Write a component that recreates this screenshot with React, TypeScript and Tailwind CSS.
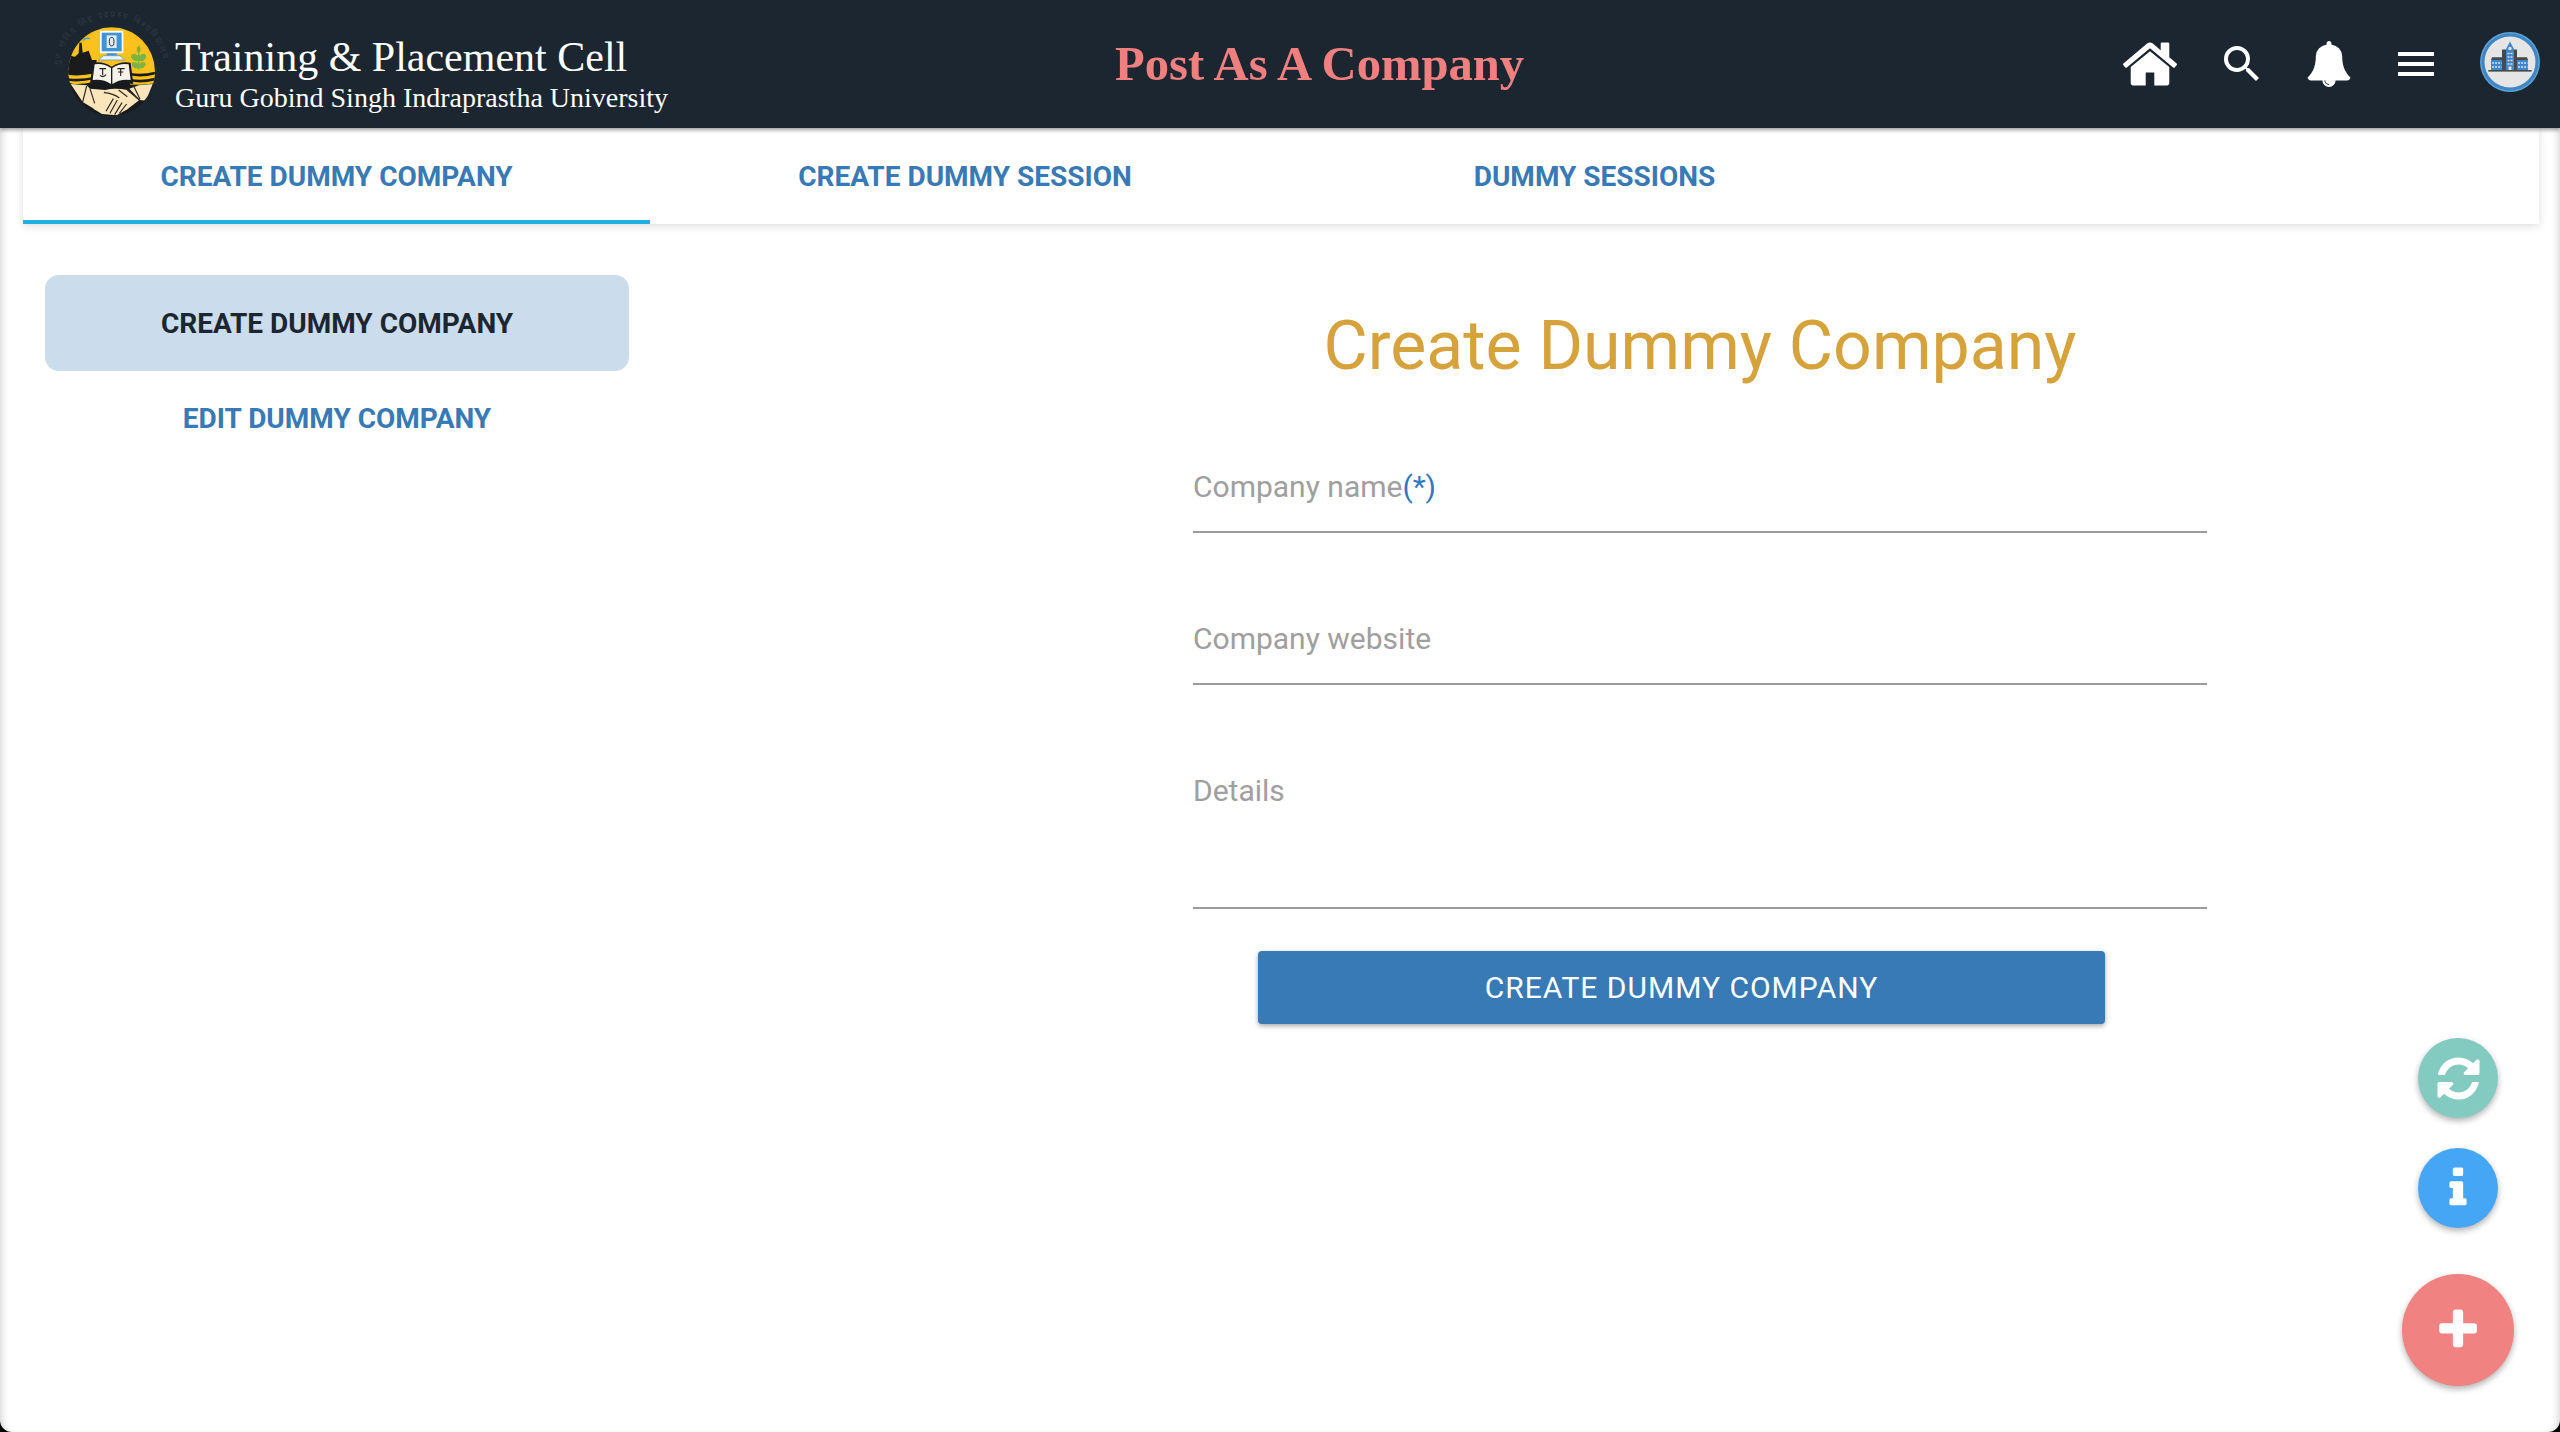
import React from "react";
import { MdSearch, MdMenu } from "react-icons/md";

const HOME = "M1472 992v480q0 26-19 45t-45 19h-384v-384h-256v384h-384q-26 0-45-19t-19-45v-480q0-1 .5-3t.5-3l575-474 575 474q1 2 1 6zm223-69l-62 74q-8 9-21 11h-3q-13 0-21-7l-692-577-692 577q-12 8-24 7-13-2-21-11l-62-74q-8-10-7-23.5t11-21.5l719-599q32-26 76-26t76 26l244 204v-195q0-14 9-23t23-9h192q14 0 23 9t9 23v408l219 182q10 8 11 21.5t-7 23.5z";
const BELL = "M912 1696q0-16-16-16-59 0-101.5-42.5t-42.5-101.5q0-16-16-16t-16 16q0 73 51.5 124.5t124.5 51.5q16 0 16-16zm816-288q0 52-38 90t-90 38h-448q0 106-75 181t-181 75-181-75-75-181h-448q-52 0-90-38t-38-90q50-42 91-88t85-119.5 74.5-158.5 50-206 19.5-260q0-152 117-282.5t307-158.5q-8-19-8-39 0-40 28-68t68-28 68 28 28 68q0 20-8 39 190 28 307 158.5t117 282.5q0 139 19.5 260t50 206 74.5 158.5 85 119.5 91 88z";
const REFRESH = "M1639 1056q0 5-1 7-64 268-268 434.5t-478 166.5q-146 0-282.5-55t-243.5-157l-129 129q-19 19-45 19t-45-19-19-45v-448q0-26 19-45t45-19h448q26 0 45 19t19 45-19 45l-137 137q71 66 161 102t187 36q134 0 250-65t186-179q11-17 53-117 8-23 30-23h192q13 0 22.5 9.5t9.5 22.5zm25-800v448q0 26-19 45t-45 19h-448q-26 0-45-19t-19-45 19-45l138-138q-148-137-349-137-134 0-250 65t-186 179q-11 17-53 117-8 23-30 23h-199q-13 0-22.5-9.5t-9.5-22.5v-7q65-268 270-434.5t480-166.5q146 0 284 55.5t245 156.5l130-129q19-19 45-19t45 19 19 45z";
const INFO = "M1216 1344v128q0 26-19 45t-45 19h-512q-26 0-45-19t-19-45v-128q0-26 19-45t45-19h64v-384h-64q-26 0-45-19t-19-45v-128q0-26 19-45t45-19h384q26 0 45 19t19 45v576h64q26 0 45 19t19 45zm-128-1152v192q0 26-19 45t-45 19h-256q-26 0-45-19t-19-45v-192q0-26 19-45t45-19h256q26 0 45 19t19 45z";
const PLUS = "M1600 736v192q0 40-28 68t-68 28h-416v416q0 40-28 68t-68 28h-192q-40 0-68-28t-28-68v-416h-416q-40 0-68-28t-28-68v-192q0-40 28-68t68-28h416v-416q0-40 28-68t68-28h192q40 0 68 28t28 68v416h416q40 0 68 28t28 68z";

function Fa({ d, size, className }: { d: string; size: number; className?: string }) {
  return (
    <svg width={size} height={size} viewBox="0 0 1792 1792" fill="currentColor" className={className}>
      <path d={d} />
    </svg>
  );
}

function Logo() {
  return (
    <svg width="124" height="118" viewBox="0 0 124 118" className="mt-[8px] shrink-0 overflow-visible">
      <g transform="translate(-10,1) scale(0.33333)">
        <defs>
          <clipPath id="lc"><ellipse cx="215" cy="185" rx="130" ry="133" /></clipPath>
          <path id="arc" d="M58 178 A157 157 0 0 1 372 178" />
        </defs>
        <text fontSize="25" fill="#2f3840" fontFamily="'Noto Sans', sans-serif"><textPath href="#arc" startOffset="12" textLength="450">गुरु गोबिंद सिंह इंद्रप्रस्थ विश्वविद्यालय</textPath></text>
        <ellipse cx="215" cy="185" rx="130" ry="133" fill="#171a1c" />
        <g clipPath="url(#lc)">
          <rect x="80" y="50" width="270" height="150" fill="#fcc11d" />
          <path d="M80 135 L105 140 L116 130 L118 98 L125 98 L128 128 L146 122 L156 150 L170 150 L165 192 L80 192 Z" fill="#191b1c" />
          <path d="M128 92 Q136 82 150 86" stroke="#4b9bd0" strokeWidth="4" fill="none" />
          <rect x="80" y="180" width="90" height="46" fill="#191b1c" />
          <path d="M80 194 Q120 200 165 190 V200 Q120 210 80 204 Z M80 212 Q120 218 160 208 V216 Q120 226 80 220 Z" fill="#fcc11d" />
          <rect x="270" y="182" width="80" height="42" fill="#fcc11d" />
          <path d="M270 188 Q305 196 350 184 V192 Q305 204 270 196 Z M270 206 Q305 214 350 202 V210 Q305 222 270 214 Z" fill="#191b1c" />
          <path d="M90 220 L190 238 L250 232 L345 220 V320 H90 Z" fill="#191b1c" />
          <path d="M92 222 L140 226 L150 236 L196 240 L172 284 L162 296 L128 276 Z" fill="#fbe6bb" />
          <path d="M338 222 L296 226 L268 236 L300 270 L318 272 Z" fill="#fbe6bb" />
          <path d="M196 240 Q225 232 262 240 L298 270 L262 298 L230 316 L186 312 L160 296 Z" fill="#fbe6bb" />
          <path d="M140 228 L128 276 M150 236 L164 280 M210 310 L232 270 M224 314 L246 278 M238 310 L260 282 M198 304 L220 266 M192 248 Q220 250 238 264 M262 240 L298 270 M280 226 L300 268 M236 240 L262 260" stroke="#2b2823" strokeWidth="3.5" fill="none" />
          <path d="M180 62 H250 V130 H180 Z" fill="#fff" />
          <rect x="185" y="68" width="60" height="56" fill="#3f93d6" />
          <rect x="200" y="76" width="30" height="38" fill="#dfe9ef" />
          <ellipse cx="215" cy="95" rx="7" ry="13" fill="none" stroke="#28333d" strokeWidth="3" />
          <rect x="200" y="130" width="30" height="7" fill="#3f93d6" />
          <path d="M176 150 L190 137 H240 L254 150 Z" fill="#e9f4fb" stroke="#3f93d6" strokeWidth="2" />
          <path d="M215 170 Q190 152 158 158 L150 222 Q190 216 215 234 Q240 216 280 222 L272 158 Q240 152 215 170 Z" fill="#191b1c" />
          <path d="M213 174 Q190 158 164 163 L158 210 Q190 206 213 222 Z M217 174 Q240 158 266 163 L272 210 Q240 206 217 222 Z" fill="#f5f2ea" />
          <path d="M178 176 H198 M188 176 V196 M180 196 Q190 204 198 194 M232 176 H254 M242 176 V198 M234 186 H250" stroke="#26221e" strokeWidth="3.5" fill="none" />
          <path d="M296 108 V180" stroke="#7cb342" strokeWidth="4" />
          <path d="M296 138 Q274 122 273 142 Q282 158 296 152 Z M296 138 Q318 122 319 142 Q310 158 296 152 Z M296 162 Q274 148 275 166 Q284 180 296 174 Z M296 162 Q318 148 317 166 Q308 180 296 174 Z M296 130 Q284 116 296 108 Q308 116 296 130 Z" fill="#7cb342" />
        </g>
      </g>
    </svg>
  );
}

function Avatar() {
  return (
    <svg width="60" height="60" viewBox="0 0 60 60">
      <circle cx="30" cy="30" r="30" fill="#5aa3d8" />
      <circle cx="30" cy="30" r="28.5" fill="#3f86c4" />
      <circle cx="30" cy="30" r="25.5" fill="#e5e5e5" />
      <rect x="22" y="17.5" width="4" height="20.5" fill="#454a4e" />
      <rect x="34" y="17.5" width="3" height="20.5" fill="#454a4e" />
      <path d="M30 9.5 L34 17 V38 H26 V17 Z" fill="#3f87cb" />
      <circle cx="30" cy="16.5" r="1.7" fill="#e5e5e5" />
      <path d="M27.5 21.5 H32.5 M27.5 25 H32.5 M27.5 28.5 H32.5 M27.5 32 H32.5" stroke="#cfe2f2" strokeWidth="1.7" strokeDasharray="2 1" />
      <rect x="28.6" y="34.5" width="2.8" height="3.5" fill="#e5e5e5" />
      <rect x="11" y="28" width="11" height="10" fill="#3f87cb" />
      <rect x="37" y="28" width="11" height="10" fill="#3f87cb" />
      <path d="M11 28 L12 25.2 H22 V28 Z M48 28 L47 25.2 H37 V28 Z" fill="#454a4e" />
      <path d="M12 31 H21.5 M12 35 H21.5 M38 31 H47.5 M38 35 H47.5" stroke="#cfe2f2" strokeWidth="1.7" strokeDasharray="2 1" />
      <rect x="8.3" y="38" width="43.4" height="1.6" fill="#454a4e" />
    </svg>
  );
}

function Field({ label, req, h }: { label: string; req?: boolean; h: string }) {
  return (
    <div className={`w-full border-b-2 border-[#9b9b9b] ${h} pt-[36px]`}>
      <span className="text-[30px] leading-[40px] text-[#a09e9e]">
        {label}
        {req && <span className="text-[#2f78bd]">(*)</span>}
      </span>
    </div>
  );
}

export default function App() {
  return (
    <div className="h-[1432px] w-[2560px] bg-black">
      <div className="relative h-[1432px] w-[2560px] overflow-hidden rounded-b-[12px] bg-white font-['Roboto',sans-serif] shadow-[inset_7px_0_7px_-5px_rgba(0,0,0,0.16),inset_-7px_0_7px_-5px_rgba(0,0,0,0.16)]">
        <header className="relative z-10 flex h-[128px] items-center bg-[#1c2630] pl-[50px] pr-[20px] shadow-[0_2px_4px_rgba(0,0,0,0.4)]">
          <div className="flex w-[1065px] items-center">
            <Logo />
            <div className="ml-[1px] pt-[19px] font-['Liberation_Serif',serif] text-white">
              <div className="text-[42px] leading-[48px]">Training &amp; Placement Cell</div>
              <div className="text-[28px] leading-[34px]">Guru Gobind Singh Indraprastha University</div>
            </div>
          </div>
          <div className="whitespace-nowrap font-['Liberation_Serif',serif] text-[48.6px] font-bold leading-[56px] text-[#f08080]">Post As A Company</div>
          <div className="ml-auto flex items-center text-white">
            <Fa d={HOME} size={60} />
            <MdSearch className="ml-[38px]" size={48} />
            <Fa d={BELL} size={46} className="ml-[40px]" />
            <MdMenu className="ml-[40px]" size={48} />
            <div className="-mt-[4px] ml-[40px]"><Avatar /></div>
          </div>
        </header>

        <nav className="ml-[23px] mr-[21px] flex h-[96px] bg-white shadow-[0_2px_8px_rgba(0,0,0,0.14)]">
          <div className="flex w-[627px] items-center justify-center border-b-4 border-[#1eb1e2] pt-[5px] text-[28px] font-bold text-[#377ab5]">CREATE DUMMY COMPANY</div>
          <div className="flex w-[630px] items-center justify-center pt-[2px] text-[28px] font-bold text-[#377ab5]">CREATE DUMMY SESSION</div>
          <div className="flex w-[629px] items-center justify-center pt-[2px] text-[28px] font-bold text-[#377ab5]">DUMMY SESSIONS</div>
        </nav>

        <main className="flex pl-[45px]">
          <aside className="w-[584px] pt-[51px]">
            <div className="flex h-[96px] items-center justify-center rounded-[14px] bg-[#cbdcec] pt-[2px] text-[28px] font-bold text-[#1c2630]">CREATE DUMMY COMPANY</div>
            <div className="mt-[28px] text-center text-[28px] font-bold leading-[40px] text-[#377ab5]">EDIT DUMMY COMPANY</div>
          </aside>
          <section className="ml-[564px] flex w-[1014px] flex-col pt-[80px]">
            <h1 className="text-center text-[68px] leading-[84px] font-normal text-[#d6a23c]">Create Dummy Company</h1>
            <div className="mt-[43px] flex flex-col gap-[50px]">
              <Field label="Company name" req h="h-[102px]" />
              <Field label="Company website" h="h-[102px]" />
              <Field label="Details" h="h-[174px]" />
            </div>
            <button className="ml-[65px] mt-[42px] h-[73px] w-[847px] rounded-[4px] bg-[#377ab5] text-[30px] tracking-[1px] text-white shadow-[0_2px_5px_rgba(0,0,0,0.35)]">CREATE DUMMY COMPANY</button>
          </section>
        </main>

        <div className="absolute right-[46px] top-[1038px] flex w-[112px] flex-col items-center">
          <div className="flex h-[80px] w-[80px] items-center justify-center rounded-full bg-[#83cbc1] text-white shadow-[0_3px_6px_rgba(0,0,0,0.3)]"><Fa d={REFRESH} size={49} /></div>
          <div className="mt-[30px] flex h-[80px] w-[80px] items-center justify-center rounded-full bg-[#45a6f5] text-white shadow-[0_3px_6px_rgba(0,0,0,0.3)]"><Fa d={INFO} size={48} /></div>
          <div className="mt-[46px] flex h-[112px] w-[112px] items-center justify-center rounded-full bg-[#f08282] text-white shadow-[0_3px_6px_rgba(0,0,0,0.3)]"><Fa d={PLUS} size={48} /></div>
        </div>
      </div>
    </div>
  );
}
